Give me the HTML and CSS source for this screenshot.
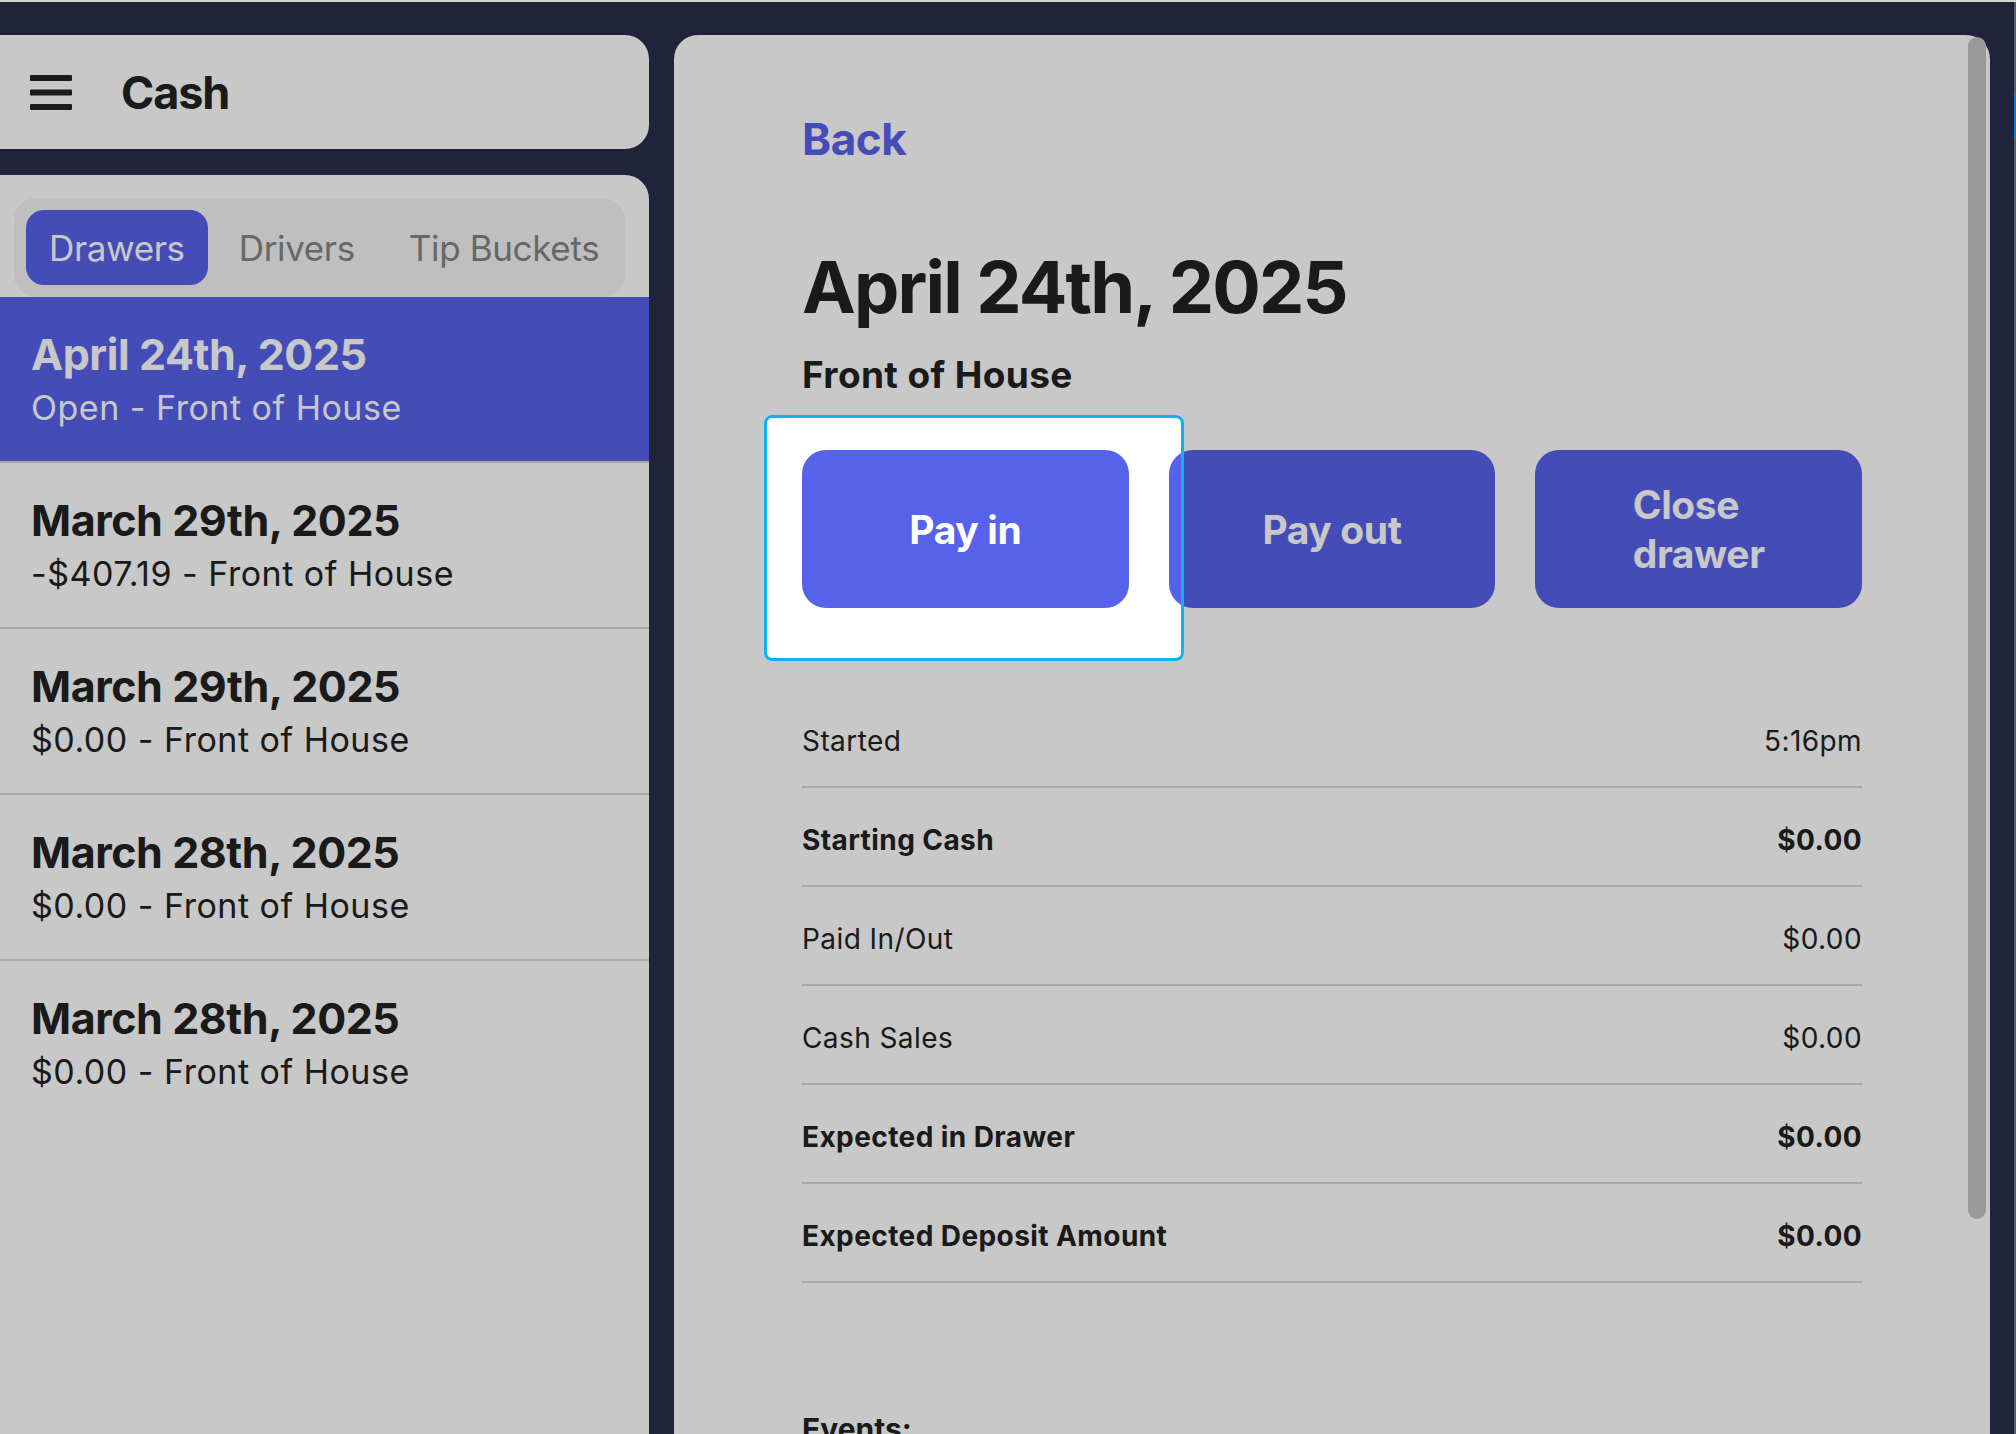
FILE: index.html
```html
<!DOCTYPE html>
<html lang="en">
<head>
    <meta charset="UTF-8">
    <meta name="viewport" content="width=device-width, initial-scale=1.0">
    <title>Cash - Drawers</title>
    <link rel="stylesheet" href="styles.css">
</head>
<body>
    <div class="topline"></div>

    <div class="app">
        <!-- Sidebar -->
        <aside class="sidebar">
            <div class="header-card">
                <svg class="menu-icon" width="42" height="35" viewBox="0 0 42 35">
                    <rect x="0" y="0" width="42" height="6" rx="1"/>
                    <rect x="0" y="14.5" width="42" height="6" rx="1"/>
                    <rect x="0" y="29" width="42" height="6" rx="1"/>
                </svg>
                <h1>Cash</h1>
            </div>

            <div class="list-card">
                <div class="tabs">
                    <div class="tab active">Drawers</div>
                    <div class="tab">Drivers</div>
                    <div class="tab">Tip Buckets</div>
                </div>

                <div class="drawer-list">
                    <div class="drawer-item selected">
                        <div class="drawer-date">April 24th, 2025</div>
                        <div class="drawer-info">Open - Front of House</div>
                    </div>
                    <div class="drawer-item">
                        <div class="drawer-date">March 29th, 2025</div>
                        <div class="drawer-info">-$407.19 - Front of House</div>
                    </div>
                    <div class="drawer-item">
                        <div class="drawer-date">March 29th, 2025</div>
                        <div class="drawer-info">$0.00 - Front of House</div>
                    </div>
                    <div class="drawer-item">
                        <div class="drawer-date">March 28th, 2025</div>
                        <div class="drawer-info">$0.00 - Front of House</div>
                    </div>
                    <div class="drawer-item">
                        <div class="drawer-date">March 28th, 2025</div>
                        <div class="drawer-info">$0.00 - Front of House</div>
                    </div>
                </div>
            </div>
        </aside>

        <!-- Drawer detail -->
        <main class="detail">
            <a class="back-link">Back</a>
            <h2 class="detail-title">April 24th, 2025</h2>
            <div class="detail-sub">Front of House</div>

            <div class="actions">
                <button class="action-btn">Pay in</button>
                <button class="action-btn">Pay out</button>
                <button class="action-btn"><span class="narrow">Close drawer</span></button>
            </div>

            <div class="summary">
                <div class="summary-row">
                    <span>Started</span>
                    <span>5:16pm</span>
                </div>
                <div class="summary-row strong">
                    <span>Starting Cash</span>
                    <span>$0.00</span>
                </div>
                <div class="summary-row">
                    <span>Paid In/Out</span>
                    <span>$0.00</span>
                </div>
                <div class="summary-row">
                    <span>Cash Sales</span>
                    <span>$0.00</span>
                </div>
                <div class="summary-row strong">
                    <span>Expected in Drawer</span>
                    <span>$0.00</span>
                </div>
                <div class="summary-row strong">
                    <span>Expected Deposit Amount</span>
                    <span>$0.00</span>
                </div>
            </div>

            <h3 class="events-title">Events:</h3>

            <div class="scroll-thumb"></div>
        </main>
    </div>

    <!-- focus highlight around the Pay in button -->
    <div class="spotlight"></div>
    <div class="edge-strip"><div class="edge-blue"></div></div>
</body>
</html>
```

FILE: styles.css
```css
body {
    margin: 0;
    background: #2a2d49;
    font-family: Inter, "Noto Sans", sans-serif;
    color: #222;
    overflow: hidden;
}
.topline {
    position: relative;
    z-index: 3;
    height: 2px;
    background: #d4d7ce;
}
.app {
    display: flex;
    gap: 25px;
    height: calc(100vh - 2px);
    padding: 33px 26px 0 0;
    box-sizing: border-box;
}

/* Sidebar */
.sidebar {
    width: 649px;
    flex-shrink: 0;
    display: flex;
    flex-direction: column;
    gap: 26px;
}
.header-card {
    height: 114px;
    flex-shrink: 0;
    display: flex;
    align-items: center;
    gap: 49px;
    padding-left: 30px;
    background: #fff;
    border-radius: 0 24px 24px 0;
}
.menu-icon {
    fill: #222;
}
.header-card h1 {
    margin: 0;
    font-size: 45px;
    font-weight: 700;
    letter-spacing: -0.025em;
}
.list-card {
    flex: 1;
    background: #fff;
    border-radius: 0 24px 0 0;
}
.tabs {
    display: flex;
    gap: 8px;
    margin: 23px 24px 0 14px;
    padding: 12px;
    background: #f4f4f4;
    border-radius: 22px;
}
.tab {
    height: 75px;
    display: flex;
    align-items: center;
    padding: 0 23px;
    font-size: 35px;
    letter-spacing: -0.01em;
    white-space: nowrap;
    color: #848484;
    border-radius: 18px;
}
.tab.active {
    background: #5762ea;
    color: #fff;
}
.drawer-item {
    padding: 30px 0 30px 31px;
    border-bottom: 2px solid #d8d8d8;
}
.drawer-item:last-child {
    border-bottom: none;
}
.drawer-item.selected {
    background: #5762ea;
    color: #fff;
}
.drawer-date {
    font-size: 43px;
    line-height: 54px;
    font-weight: 700;
    letter-spacing: -0.01em;
}
.drawer-info {
    margin-top: 3px;
    font-size: 34px;
    line-height: 47px;
    letter-spacing: 0.015em;
}

/* Detail panel */
.detail {
    position: relative;
    flex: 1;
    background: #fff;
    border-radius: 24px 24px 0 0;
    padding: 78px 128px 0;
}
.back-link {
    display: block;
    font-size: 44px;
    line-height: 53px;
    font-weight: 700;
    color: #5762ea;
    letter-spacing: -0.01em;
}
.detail-title {
    margin: 78px 0 0;
    font-size: 72px;
    line-height: 86px;
    font-weight: 700;
    letter-spacing: -0.025em;
}
.detail-sub {
    margin-top: 23px;
    font-size: 37px;
    line-height: 44px;
    font-weight: 700;
    letter-spacing: 0.01em;
}
.actions {
    display: flex;
    gap: 40px;
    margin-top: 53px;
}
.action-btn {
    flex: 1;
    height: 158px;
    border: none;
    border-radius: 24px;
    background: #5762ea;
    color: #fff;
    font-family: inherit;
    font-size: 39px;
    line-height: 49px;
    font-weight: 700;
    letter-spacing: -0.01em;
    display: flex;
    align-items: center;
    justify-content: center;
}
.action-btn .narrow {
    width: min-content;
    text-align: left;
}
.summary {
    margin-top: 81px;
}
.summary-row {
    height: 99px;
    box-sizing: border-box;
    padding-top: 6px;
    display: flex;
    align-items: center;
    justify-content: space-between;
    border-bottom: 2px solid #d8d8d8;
    font-size: 28px;
    letter-spacing: 0.015em;
}
.summary-row.strong {
    font-weight: 700;
}
.events-title {
    margin: 128px 0 0;
    font-size: 30px;
    line-height: 36px;
    font-weight: 700;
}
.scroll-thumb {
    position: absolute;
    top: 2px;
    right: 4px;
    width: 18px;
    height: 1182px;
    border-radius: 9px;
    background: #c3c3c3;
}

/* Overlays */
.spotlight {
    position: absolute;
    left: 764px;
    top: 415px;
    width: 420px;
    height: 246px;
    box-sizing: border-box;
    border: 3px solid #0bb4ee;
    border-radius: 8px;
    box-shadow: 0 0 0 4000px rgba(0, 0, 0, 0.216);
    z-index: 2;
    pointer-events: none;
}
.edge-strip {
    position: absolute;
    top: 2px;
    right: 0;
    width: 2px;
    height: 100%;
    background: #5b5d6e;
    z-index: 3;
}
.edge-blue {
    margin-top: 91px;
    height: 46px;
    background: #0b7fcf;
}
```
